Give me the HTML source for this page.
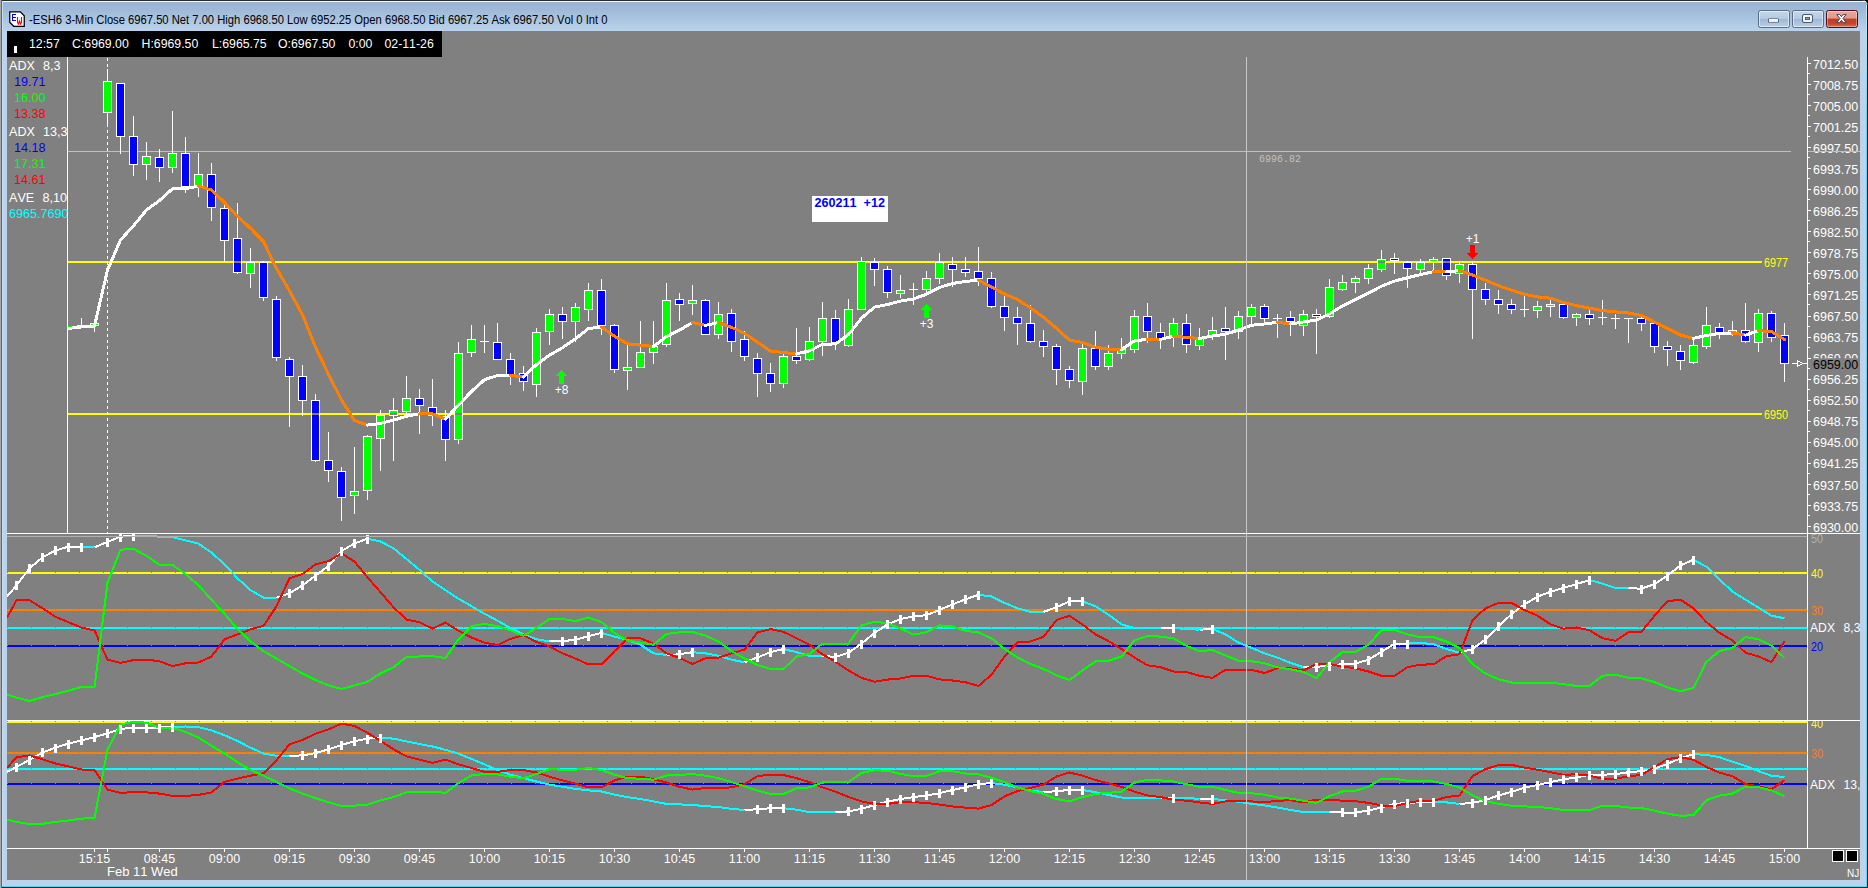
<!DOCTYPE html>
<html><head><meta charset="utf-8"><title>ESH6 3-Min</title>
<style>
html,body{margin:0;padding:0;background:#000;}
#win{border-top-right-radius:6px;position:relative;width:1868px;height:888px;overflow:hidden;background:#bcd3eb;font-family:"Liberation Sans",sans-serif;font-kerning:none;}
#tb{position:absolute;left:0;top:0;width:1868px;height:31px;background:linear-gradient(#98b4d2 2px,#9cb8d6 8px,#bad2ec 31px);}
#chart{position:absolute;left:7px;top:31px;width:1853px;height:849px;background:#808080;}
.t{position:absolute;white-space:nowrap;line-height:16px;font-size:12.3px;color:#fff;}
.c{font-size:12.5px}
.c{text-align:center;}
#title{position:absolute;left:29px;top:12px;font-size:12.5px;line-height:16px;color:#000;white-space:nowrap;transform:scaleX(0.897);transform-origin:0 0;}
.btn{position:absolute;top:10px;height:18px;width:32px;border:1px solid #5a6b82;border-radius:2.5px;box-sizing:border-box;background:linear-gradient(#c4d6ea 0,#b4cae2 48%,#9db8d6 52%,#b9cfe8 100%);box-shadow:inset 0 0 0 1px rgba(255,255,255,.55);}
#bx{border-color:#4a1020;background:linear-gradient(#eaa898 0,#e09a8a 45%,#c03c24 50%,#c8452c 80%,#d8705a 100%);box-shadow:inset 0 0 0 1px rgba(255,255,255,.35);}
#info{position:absolute;left:7px;top:31px;width:435px;height:26px;background:#000;}
</style></head><body>
<div id="win">
<div id="tb"></div>
<div style="position:absolute;left:2px;top:0;width:1868px;height:1px;background:#2a2a2a"></div>
<div style="position:absolute;left:2px;top:1px;width:1864px;height:1px;background:#f4f8fc"></div>
<div style="position:absolute;left:0;top:0;width:1px;height:888px;background:#a8a8a8"></div><div style="position:absolute;left:1px;top:0;width:1px;height:888px;background:#666"></div>
<div style="position:absolute;left:2px;top:1px;width:1px;height:886px;background:#c4dcf4"></div>
<div style="position:absolute;left:1866px;top:5px;width:1px;height:888px;background:linear-gradient(#b8f0fc,#4fdcf8 120px)"></div>
<div style="position:absolute;left:1867px;top:0px;width:1px;height:888px;background:#000"></div>
<div style="position:absolute;left:2px;top:886px;width:1865px;height:1px;background:#3ce0fc"></div>
<div style="position:absolute;left:2px;top:887px;width:1868px;height:1px;background:#101010"></div>
<svg style="position:absolute;left:9px;top:11px" width="16" height="16" viewBox="0 0 16 16">
<polygon points="0.75,0.75 11.3,0.75 15.25,4.7 15.25,15.25 4.7,15.25 0.75,11.3" fill="#fff" stroke="#000" stroke-width="1.25"/>
<path d="M7 3.5H3.5V9.5H7M3.5 6.5H6.5" fill="none" stroke="#0000ff" stroke-width="1.15" shape-rendering="crispEdges"/>
<path d="M8.5 6V11.5L9.5 13L10.5 10L11.5 13L12.5 11.5V6" fill="none" stroke="#ff0000" stroke-width="1.15"/>
</svg>
<div id="title">-ESH6 3-Min Close 6967.50 Net 7.00 High 6968.50 Low 6952.25 Open 6968.50 Bid 6967.25 Ask 6967.50 Vol 0 Int 0</div>
<div class="btn" style="left:1758px"><div style="position:absolute;left:9px;top:7px;width:9px;height:3px;background:linear-gradient(#fff,#e4e4e4);border:1px solid #56667e;border-top-color:#7888a0;border-bottom-color:#7888a0;border-radius:1.5px;box-sizing:content-box"></div></div>
<div class="btn" style="left:1792px"><div style="position:absolute;left:10.3px;top:3.8px;width:4.6px;height:2.8px;border:2px solid #f4f4f4;outline:1px solid #4a5a70;border-radius:1px;background:#8fa9c8;box-shadow:inset 0 0 0 1px #4a5a70"></div></div>
<div class="btn" id="bx" style="left:1826px"><svg width="30" height="16" style="position:absolute;left:0;top:0"><polygon points="9.75,3.60 12.75,3.60 14.45,5.67 16.15,3.60 19.15,3.60 15.95,7.50 19.15,11.40 16.15,11.40 14.45,9.33 12.75,11.40 9.75,11.40 12.95,7.50" fill="#fff" stroke="#3c4658" stroke-width="1" stroke-linejoin="round"/></svg></div>
<div id="chart"></div>
<div id="info">
<div style="position:absolute;left:7px;top:15px;width:3px;height:7px;background:#fff"></div>
<div class="t" style="left:22px;top:5px;font-size:12.3px">12:57</div>
<div class="t" style="left:65px;top:5px;font-size:12.3px">C:6969.00</div>
<div class="t" style="left:134.5px;top:5px;font-size:12.3px">H:6969.50</div>
<div class="t" style="left:205px;top:5px;font-size:12.3px">L:6965.75</div>
<div class="t" style="left:271px;top:5px;font-size:12.3px">O:6967.50</div>
<div class="t" style="left:341.5px;top:5px;font-size:12.3px">0:00</div>
<div class="t" style="left:377.5px;top:5px;font-size:12.3px">02-11-26</div>
</div>
<svg style="position:absolute;left:0;top:0" width="1868" height="888" viewBox="0 0 1868 888" shape-rendering="crispEdges">
<defs>
<pattern id="dots" x="7" y="0" width="24" height="1" patternUnits="userSpaceOnUse"><rect x="0" y="0" width="1" height="1" fill="#8a8a8a"/></pattern>
<clipPath id="cm"><rect x="67" y="57" width="1740" height="476"/></clipPath>
<clipPath id="c1"><rect x="7" y="534" width="1800" height="186"/></clipPath>
<clipPath id="c2"><rect x="7" y="721" width="1800" height="127"/></clipPath>
</defs>
<g clip-path="url(#cm)">
<rect x="67" y="151" width="1724" height="1" fill="#c0c0c0"/>
<rect x="67" y="261" width="1695" height="2" fill="#ffff00"/>
<rect x="67" y="413" width="1695" height="2" fill="#ffff00"/>
<line x1="107.5" y1="58" x2="107.5" y2="533" stroke="#fff" stroke-width="1" stroke-dasharray="3,3"/>
<rect x="68" y="326" width="4" height="1" fill="#00ff00"/>
<rect x="81" y="318" width="1" height="10" fill="#fff"/>
<rect x="77" y="325" width="9" height="1" fill="#fff"/>
<rect x="94" y="322" width="1" height="10" fill="#fff"/>
<rect x="90" y="323" width="9" height="3" fill="#fff"/>
<rect x="91" y="324" width="7" height="1" fill="#00ff00"/>
<rect x="107" y="69" width="1" height="58" fill="#fff"/>
<rect x="103" y="81" width="9" height="32" fill="#fff"/>
<rect x="104" y="82" width="7" height="30" fill="#00ff00"/>
<rect x="120" y="83" width="1" height="71" fill="#fff"/>
<rect x="116" y="83" width="9" height="54" fill="#fff"/>
<rect x="117" y="84" width="7" height="52" fill="#0000ff"/>
<rect x="133" y="116" width="1" height="60" fill="#fff"/>
<rect x="129" y="136" width="9" height="29" fill="#fff"/>
<rect x="130" y="137" width="7" height="27" fill="#0000ff"/>
<rect x="146" y="142" width="1" height="38" fill="#fff"/>
<rect x="142" y="156" width="9" height="9" fill="#fff"/>
<rect x="143" y="157" width="7" height="7" fill="#00ff00"/>
<rect x="159" y="149" width="1" height="33" fill="#fff"/>
<rect x="155" y="157" width="9" height="11" fill="#fff"/>
<rect x="156" y="158" width="7" height="9" fill="#0000ff"/>
<rect x="172" y="111" width="1" height="62" fill="#fff"/>
<rect x="168" y="153" width="9" height="15" fill="#fff"/>
<rect x="169" y="154" width="7" height="13" fill="#00ff00"/>
<rect x="185" y="137" width="1" height="56" fill="#fff"/>
<rect x="181" y="153" width="9" height="34" fill="#fff"/>
<rect x="182" y="154" width="7" height="32" fill="#0000ff"/>
<rect x="198" y="153" width="1" height="44" fill="#fff"/>
<rect x="194" y="174" width="9" height="14" fill="#fff"/>
<rect x="195" y="175" width="7" height="12" fill="#00ff00"/>
<rect x="211" y="163" width="1" height="58" fill="#fff"/>
<rect x="207" y="174" width="9" height="34" fill="#fff"/>
<rect x="208" y="175" width="7" height="32" fill="#0000ff"/>
<rect x="224" y="205" width="1" height="56" fill="#fff"/>
<rect x="220" y="208" width="9" height="33" fill="#fff"/>
<rect x="221" y="209" width="7" height="31" fill="#0000ff"/>
<rect x="237" y="203" width="1" height="71" fill="#fff"/>
<rect x="233" y="238" width="9" height="35" fill="#fff"/>
<rect x="234" y="239" width="7" height="33" fill="#0000ff"/>
<rect x="234" y="261" width="7" height="2" fill="#808080"/>
<rect x="250" y="248" width="1" height="40" fill="#fff"/>
<rect x="246" y="262" width="9" height="12" fill="#fff"/>
<rect x="247" y="263" width="7" height="10" fill="#00ff00"/>
<rect x="263" y="261" width="1" height="40" fill="#fff"/>
<rect x="259" y="262" width="9" height="36" fill="#fff"/>
<rect x="260" y="263" width="7" height="34" fill="#0000ff"/>
<rect x="276" y="296" width="1" height="65" fill="#fff"/>
<rect x="272" y="299" width="9" height="59" fill="#fff"/>
<rect x="273" y="300" width="7" height="57" fill="#0000ff"/>
<rect x="289" y="357" width="1" height="70" fill="#fff"/>
<rect x="285" y="359" width="9" height="18" fill="#fff"/>
<rect x="286" y="360" width="7" height="16" fill="#0000ff"/>
<rect x="302" y="365" width="1" height="51" fill="#fff"/>
<rect x="298" y="376" width="9" height="25" fill="#fff"/>
<rect x="299" y="377" width="7" height="23" fill="#0000ff"/>
<rect x="315" y="394" width="1" height="68" fill="#fff"/>
<rect x="311" y="400" width="9" height="61" fill="#fff"/>
<rect x="312" y="401" width="7" height="59" fill="#0000ff"/>
<rect x="312" y="413" width="7" height="2" fill="#808080"/>
<rect x="328" y="432" width="1" height="50" fill="#fff"/>
<rect x="324" y="460" width="9" height="11" fill="#fff"/>
<rect x="325" y="461" width="7" height="9" fill="#0000ff"/>
<rect x="341" y="467" width="1" height="54" fill="#fff"/>
<rect x="337" y="471" width="9" height="27" fill="#fff"/>
<rect x="338" y="472" width="7" height="25" fill="#0000ff"/>
<rect x="354" y="447" width="1" height="67" fill="#fff"/>
<rect x="350" y="491" width="9" height="5" fill="#fff"/>
<rect x="351" y="492" width="7" height="3" fill="#00ff00"/>
<rect x="367" y="435" width="1" height="65" fill="#fff"/>
<rect x="363" y="436" width="9" height="55" fill="#fff"/>
<rect x="364" y="437" width="7" height="53" fill="#00ff00"/>
<rect x="380" y="410" width="1" height="61" fill="#fff"/>
<rect x="376" y="415" width="9" height="24" fill="#fff"/>
<rect x="377" y="416" width="7" height="22" fill="#00ff00"/>
<rect x="393" y="398" width="1" height="63" fill="#fff"/>
<rect x="389" y="410" width="9" height="6" fill="#fff"/>
<rect x="390" y="411" width="7" height="4" fill="#00ff00"/>
<rect x="390" y="413" width="7" height="2" fill="#808080"/>
<rect x="406" y="376" width="1" height="39" fill="#fff"/>
<rect x="402" y="398" width="9" height="14" fill="#fff"/>
<rect x="403" y="399" width="7" height="12" fill="#00ff00"/>
<rect x="419" y="389" width="1" height="45" fill="#fff"/>
<rect x="415" y="398" width="9" height="8" fill="#fff"/>
<rect x="416" y="399" width="7" height="6" fill="#0000ff"/>
<rect x="432" y="379" width="1" height="47" fill="#fff"/>
<rect x="428" y="407" width="9" height="9" fill="#fff"/>
<rect x="429" y="408" width="7" height="7" fill="#0000ff"/>
<rect x="429" y="413" width="7" height="2" fill="#808080"/>
<rect x="445" y="410" width="1" height="51" fill="#fff"/>
<rect x="441" y="416" width="9" height="24" fill="#fff"/>
<rect x="442" y="417" width="7" height="22" fill="#0000ff"/>
<rect x="458" y="342" width="1" height="102" fill="#fff"/>
<rect x="454" y="353" width="9" height="87" fill="#fff"/>
<rect x="455" y="354" width="7" height="85" fill="#00ff00"/>
<rect x="455" y="413" width="7" height="2" fill="#808080"/>
<rect x="471" y="325" width="1" height="32" fill="#fff"/>
<rect x="467" y="339" width="9" height="14" fill="#fff"/>
<rect x="468" y="340" width="7" height="12" fill="#00ff00"/>
<rect x="484" y="325" width="1" height="28" fill="#fff"/>
<rect x="480" y="341" width="9" height="1" fill="#fff"/>
<rect x="497" y="323" width="1" height="37" fill="#fff"/>
<rect x="493" y="342" width="9" height="18" fill="#fff"/>
<rect x="494" y="343" width="7" height="16" fill="#0000ff"/>
<rect x="510" y="353" width="1" height="32" fill="#fff"/>
<rect x="506" y="359" width="9" height="16" fill="#fff"/>
<rect x="507" y="360" width="7" height="14" fill="#0000ff"/>
<rect x="523" y="366" width="1" height="25" fill="#fff"/>
<rect x="519" y="373" width="9" height="9" fill="#fff"/>
<rect x="520" y="374" width="7" height="7" fill="#0000ff"/>
<rect x="536" y="328" width="1" height="69" fill="#fff"/>
<rect x="532" y="332" width="9" height="53" fill="#fff"/>
<rect x="533" y="333" width="7" height="51" fill="#00ff00"/>
<rect x="549" y="309" width="1" height="36" fill="#fff"/>
<rect x="545" y="314" width="9" height="18" fill="#fff"/>
<rect x="546" y="315" width="7" height="16" fill="#00ff00"/>
<rect x="562" y="307" width="1" height="32" fill="#fff"/>
<rect x="558" y="314" width="9" height="8" fill="#fff"/>
<rect x="559" y="315" width="7" height="6" fill="#0000ff"/>
<rect x="575" y="303" width="1" height="39" fill="#fff"/>
<rect x="571" y="307" width="9" height="15" fill="#fff"/>
<rect x="572" y="308" width="7" height="13" fill="#00ff00"/>
<rect x="588" y="283" width="1" height="38" fill="#fff"/>
<rect x="584" y="290" width="9" height="20" fill="#fff"/>
<rect x="585" y="291" width="7" height="18" fill="#00ff00"/>
<rect x="601" y="279" width="1" height="56" fill="#fff"/>
<rect x="597" y="290" width="9" height="36" fill="#fff"/>
<rect x="598" y="291" width="7" height="34" fill="#0000ff"/>
<rect x="614" y="324" width="1" height="49" fill="#fff"/>
<rect x="610" y="325" width="9" height="45" fill="#fff"/>
<rect x="611" y="326" width="7" height="43" fill="#0000ff"/>
<rect x="627" y="342" width="1" height="48" fill="#fff"/>
<rect x="623" y="367" width="9" height="4" fill="#fff"/>
<rect x="624" y="368" width="7" height="2" fill="#00ff00"/>
<rect x="640" y="321" width="1" height="47" fill="#fff"/>
<rect x="636" y="352" width="9" height="16" fill="#fff"/>
<rect x="637" y="353" width="7" height="14" fill="#00ff00"/>
<rect x="653" y="321" width="1" height="43" fill="#fff"/>
<rect x="649" y="346" width="9" height="7" fill="#fff"/>
<rect x="650" y="347" width="7" height="5" fill="#00ff00"/>
<rect x="666" y="283" width="1" height="64" fill="#fff"/>
<rect x="662" y="300" width="9" height="45" fill="#fff"/>
<rect x="663" y="301" width="7" height="43" fill="#00ff00"/>
<rect x="679" y="293" width="1" height="28" fill="#fff"/>
<rect x="675" y="299" width="9" height="6" fill="#fff"/>
<rect x="676" y="300" width="7" height="4" fill="#0000ff"/>
<rect x="692" y="285" width="1" height="30" fill="#fff"/>
<rect x="688" y="300" width="9" height="4" fill="#fff"/>
<rect x="689" y="301" width="7" height="2" fill="#00ff00"/>
<rect x="705" y="299" width="1" height="36" fill="#fff"/>
<rect x="701" y="300" width="9" height="35" fill="#fff"/>
<rect x="702" y="301" width="7" height="33" fill="#0000ff"/>
<rect x="718" y="302" width="1" height="37" fill="#fff"/>
<rect x="714" y="314" width="9" height="21" fill="#fff"/>
<rect x="715" y="315" width="7" height="19" fill="#00ff00"/>
<rect x="731" y="309" width="1" height="43" fill="#fff"/>
<rect x="727" y="313" width="9" height="29" fill="#fff"/>
<rect x="728" y="314" width="7" height="27" fill="#0000ff"/>
<rect x="744" y="331" width="1" height="30" fill="#fff"/>
<rect x="740" y="339" width="9" height="18" fill="#fff"/>
<rect x="741" y="340" width="7" height="16" fill="#0000ff"/>
<rect x="757" y="353" width="1" height="44" fill="#fff"/>
<rect x="753" y="358" width="9" height="16" fill="#fff"/>
<rect x="754" y="359" width="7" height="14" fill="#0000ff"/>
<rect x="770" y="363" width="1" height="29" fill="#fff"/>
<rect x="766" y="373" width="9" height="11" fill="#fff"/>
<rect x="767" y="374" width="7" height="9" fill="#0000ff"/>
<rect x="783" y="354" width="1" height="34" fill="#fff"/>
<rect x="779" y="356" width="9" height="28" fill="#fff"/>
<rect x="780" y="357" width="7" height="26" fill="#00ff00"/>
<rect x="796" y="328" width="1" height="36" fill="#fff"/>
<rect x="792" y="356" width="9" height="5" fill="#fff"/>
<rect x="793" y="357" width="7" height="3" fill="#0000ff"/>
<rect x="809" y="327" width="1" height="34" fill="#fff"/>
<rect x="805" y="341" width="9" height="19" fill="#fff"/>
<rect x="806" y="342" width="7" height="17" fill="#00ff00"/>
<rect x="822" y="302" width="1" height="54" fill="#fff"/>
<rect x="818" y="318" width="9" height="24" fill="#fff"/>
<rect x="819" y="319" width="7" height="22" fill="#00ff00"/>
<rect x="835" y="310" width="1" height="40" fill="#fff"/>
<rect x="831" y="318" width="9" height="25" fill="#fff"/>
<rect x="832" y="319" width="7" height="23" fill="#0000ff"/>
<rect x="848" y="299" width="1" height="48" fill="#fff"/>
<rect x="844" y="309" width="9" height="37" fill="#fff"/>
<rect x="845" y="310" width="7" height="35" fill="#00ff00"/>
<rect x="861" y="257" width="1" height="53" fill="#fff"/>
<rect x="857" y="261" width="9" height="49" fill="#fff"/>
<rect x="858" y="262" width="7" height="47" fill="#00ff00"/>
<rect x="874" y="258" width="1" height="28" fill="#fff"/>
<rect x="870" y="262" width="9" height="8" fill="#fff"/>
<rect x="871" y="263" width="7" height="6" fill="#0000ff"/>
<rect x="887" y="266" width="1" height="32" fill="#fff"/>
<rect x="883" y="269" width="9" height="24" fill="#fff"/>
<rect x="884" y="270" width="7" height="22" fill="#0000ff"/>
<rect x="900" y="275" width="1" height="23" fill="#fff"/>
<rect x="896" y="290" width="9" height="4" fill="#fff"/>
<rect x="897" y="291" width="7" height="2" fill="#00ff00"/>
<rect x="913" y="283" width="1" height="22" fill="#fff"/>
<rect x="909" y="289" width="9" height="1" fill="#fff"/>
<rect x="926" y="271" width="1" height="23" fill="#fff"/>
<rect x="922" y="278" width="9" height="12" fill="#fff"/>
<rect x="923" y="279" width="7" height="10" fill="#00ff00"/>
<rect x="939" y="253" width="1" height="31" fill="#fff"/>
<rect x="935" y="262" width="9" height="17" fill="#fff"/>
<rect x="936" y="263" width="7" height="15" fill="#00ff00"/>
<rect x="952" y="257" width="1" height="30" fill="#fff"/>
<rect x="948" y="264" width="9" height="6" fill="#fff"/>
<rect x="949" y="265" width="7" height="4" fill="#0000ff"/>
<rect x="965" y="257" width="1" height="20" fill="#fff"/>
<rect x="961" y="269" width="9" height="4" fill="#fff"/>
<rect x="962" y="270" width="7" height="2" fill="#0000ff"/>
<rect x="978" y="247" width="1" height="39" fill="#fff"/>
<rect x="974" y="271" width="9" height="8" fill="#fff"/>
<rect x="975" y="272" width="7" height="6" fill="#0000ff"/>
<rect x="991" y="272" width="1" height="36" fill="#fff"/>
<rect x="987" y="278" width="9" height="29" fill="#fff"/>
<rect x="988" y="279" width="7" height="27" fill="#0000ff"/>
<rect x="1004" y="296" width="1" height="35" fill="#fff"/>
<rect x="1000" y="306" width="9" height="12" fill="#fff"/>
<rect x="1001" y="307" width="7" height="10" fill="#0000ff"/>
<rect x="1017" y="307" width="1" height="38" fill="#fff"/>
<rect x="1013" y="317" width="9" height="7" fill="#fff"/>
<rect x="1014" y="318" width="7" height="5" fill="#0000ff"/>
<rect x="1030" y="305" width="1" height="38" fill="#fff"/>
<rect x="1026" y="323" width="9" height="19" fill="#fff"/>
<rect x="1027" y="324" width="7" height="17" fill="#0000ff"/>
<rect x="1043" y="330" width="1" height="27" fill="#fff"/>
<rect x="1039" y="341" width="9" height="6" fill="#fff"/>
<rect x="1040" y="342" width="7" height="4" fill="#0000ff"/>
<rect x="1056" y="344" width="1" height="41" fill="#fff"/>
<rect x="1052" y="346" width="9" height="24" fill="#fff"/>
<rect x="1053" y="347" width="7" height="22" fill="#0000ff"/>
<rect x="1069" y="366" width="1" height="22" fill="#fff"/>
<rect x="1065" y="369" width="9" height="12" fill="#fff"/>
<rect x="1066" y="370" width="7" height="10" fill="#0000ff"/>
<rect x="1082" y="344" width="1" height="51" fill="#fff"/>
<rect x="1078" y="348" width="9" height="34" fill="#fff"/>
<rect x="1079" y="349" width="7" height="32" fill="#00ff00"/>
<rect x="1095" y="331" width="1" height="39" fill="#fff"/>
<rect x="1091" y="348" width="9" height="19" fill="#fff"/>
<rect x="1092" y="349" width="7" height="17" fill="#0000ff"/>
<rect x="1108" y="345" width="1" height="25" fill="#fff"/>
<rect x="1104" y="353" width="9" height="14" fill="#fff"/>
<rect x="1105" y="354" width="7" height="12" fill="#00ff00"/>
<rect x="1121" y="338" width="1" height="21" fill="#fff"/>
<rect x="1117" y="349" width="9" height="5" fill="#fff"/>
<rect x="1118" y="350" width="7" height="3" fill="#00ff00"/>
<rect x="1134" y="310" width="1" height="43" fill="#fff"/>
<rect x="1130" y="316" width="9" height="34" fill="#fff"/>
<rect x="1131" y="317" width="7" height="32" fill="#00ff00"/>
<rect x="1147" y="303" width="1" height="40" fill="#fff"/>
<rect x="1143" y="316" width="9" height="16" fill="#fff"/>
<rect x="1144" y="317" width="7" height="14" fill="#0000ff"/>
<rect x="1160" y="323" width="1" height="26" fill="#fff"/>
<rect x="1156" y="332" width="9" height="7" fill="#fff"/>
<rect x="1157" y="333" width="7" height="5" fill="#0000ff"/>
<rect x="1173" y="318" width="1" height="29" fill="#fff"/>
<rect x="1169" y="323" width="9" height="13" fill="#fff"/>
<rect x="1170" y="324" width="7" height="11" fill="#00ff00"/>
<rect x="1186" y="314" width="1" height="39" fill="#fff"/>
<rect x="1182" y="323" width="9" height="22" fill="#fff"/>
<rect x="1183" y="324" width="7" height="20" fill="#0000ff"/>
<rect x="1199" y="328" width="1" height="22" fill="#fff"/>
<rect x="1195" y="338" width="9" height="8" fill="#fff"/>
<rect x="1196" y="339" width="7" height="6" fill="#00ff00"/>
<rect x="1212" y="317" width="1" height="23" fill="#fff"/>
<rect x="1208" y="330" width="9" height="6" fill="#fff"/>
<rect x="1209" y="331" width="7" height="4" fill="#00ff00"/>
<rect x="1225" y="307" width="1" height="53" fill="#fff"/>
<rect x="1221" y="328" width="9" height="4" fill="#fff"/>
<rect x="1222" y="329" width="7" height="2" fill="#0000ff"/>
<rect x="1238" y="311" width="1" height="28" fill="#fff"/>
<rect x="1234" y="316" width="9" height="16" fill="#fff"/>
<rect x="1235" y="317" width="7" height="14" fill="#00ff00"/>
<rect x="1251" y="304" width="1" height="21" fill="#fff"/>
<rect x="1247" y="307" width="9" height="10" fill="#fff"/>
<rect x="1248" y="308" width="7" height="8" fill="#00ff00"/>
<rect x="1264" y="304" width="1" height="19" fill="#fff"/>
<rect x="1260" y="306" width="9" height="13" fill="#fff"/>
<rect x="1261" y="307" width="7" height="11" fill="#0000ff"/>
<rect x="1277" y="314" width="1" height="24" fill="#fff"/>
<rect x="1273" y="318" width="9" height="1" fill="#fff"/>
<rect x="1290" y="311" width="1" height="25" fill="#fff"/>
<rect x="1286" y="317" width="9" height="5" fill="#fff"/>
<rect x="1287" y="318" width="7" height="3" fill="#0000ff"/>
<rect x="1303" y="310" width="1" height="26" fill="#fff"/>
<rect x="1299" y="314" width="9" height="12" fill="#fff"/>
<rect x="1300" y="315" width="7" height="10" fill="#00ff00"/>
<rect x="1316" y="309" width="1" height="45" fill="#fff"/>
<rect x="1312" y="314" width="9" height="3" fill="#fff"/>
<rect x="1313" y="315" width="7" height="1" fill="#0000ff"/>
<rect x="1329" y="279" width="1" height="39" fill="#fff"/>
<rect x="1325" y="287" width="9" height="30" fill="#fff"/>
<rect x="1326" y="288" width="7" height="28" fill="#00ff00"/>
<rect x="1342" y="275" width="1" height="16" fill="#fff"/>
<rect x="1338" y="282" width="9" height="8" fill="#fff"/>
<rect x="1339" y="283" width="7" height="6" fill="#00ff00"/>
<rect x="1355" y="276" width="1" height="17" fill="#fff"/>
<rect x="1351" y="278" width="9" height="5" fill="#fff"/>
<rect x="1352" y="279" width="7" height="3" fill="#00ff00"/>
<rect x="1368" y="264" width="1" height="20" fill="#fff"/>
<rect x="1364" y="268" width="9" height="11" fill="#fff"/>
<rect x="1365" y="269" width="7" height="9" fill="#00ff00"/>
<rect x="1381" y="250" width="1" height="22" fill="#fff"/>
<rect x="1377" y="259" width="9" height="11" fill="#fff"/>
<rect x="1378" y="260" width="7" height="9" fill="#00ff00"/>
<rect x="1378" y="261" width="7" height="2" fill="#808080"/>
<rect x="1394" y="253" width="1" height="21" fill="#fff"/>
<rect x="1390" y="258" width="9" height="3" fill="#fff"/>
<rect x="1391" y="259" width="7" height="1" fill="#0000ff"/>
<rect x="1407" y="261" width="1" height="27" fill="#fff"/>
<rect x="1403" y="262" width="9" height="7" fill="#fff"/>
<rect x="1404" y="263" width="7" height="5" fill="#0000ff"/>
<rect x="1420" y="259" width="1" height="14" fill="#fff"/>
<rect x="1416" y="262" width="9" height="8" fill="#fff"/>
<rect x="1417" y="263" width="7" height="6" fill="#00ff00"/>
<rect x="1433" y="257" width="1" height="14" fill="#fff"/>
<rect x="1429" y="259" width="9" height="3" fill="#fff"/>
<rect x="1430" y="260" width="7" height="1" fill="#00ff00"/>
<rect x="1446" y="258" width="1" height="22" fill="#fff"/>
<rect x="1442" y="258" width="9" height="18" fill="#fff"/>
<rect x="1443" y="259" width="7" height="16" fill="#0000ff"/>
<rect x="1443" y="261" width="7" height="2" fill="#808080"/>
<rect x="1459" y="261" width="1" height="22" fill="#fff"/>
<rect x="1455" y="264" width="9" height="10" fill="#fff"/>
<rect x="1456" y="265" width="7" height="8" fill="#00ff00"/>
<rect x="1472" y="261" width="1" height="78" fill="#fff"/>
<rect x="1468" y="264" width="9" height="26" fill="#fff"/>
<rect x="1469" y="265" width="7" height="24" fill="#0000ff"/>
<rect x="1485" y="283" width="1" height="22" fill="#fff"/>
<rect x="1481" y="289" width="9" height="11" fill="#fff"/>
<rect x="1482" y="290" width="7" height="9" fill="#0000ff"/>
<rect x="1498" y="290" width="1" height="24" fill="#fff"/>
<rect x="1494" y="299" width="9" height="6" fill="#fff"/>
<rect x="1495" y="300" width="7" height="4" fill="#0000ff"/>
<rect x="1511" y="299" width="1" height="15" fill="#fff"/>
<rect x="1507" y="304" width="9" height="6" fill="#fff"/>
<rect x="1508" y="305" width="7" height="4" fill="#0000ff"/>
<rect x="1524" y="295" width="1" height="22" fill="#fff"/>
<rect x="1520" y="309" width="9" height="1" fill="#fff"/>
<rect x="1537" y="301" width="1" height="17" fill="#fff"/>
<rect x="1533" y="306" width="9" height="5" fill="#fff"/>
<rect x="1534" y="307" width="7" height="3" fill="#00ff00"/>
<rect x="1550" y="300" width="1" height="17" fill="#fff"/>
<rect x="1546" y="304" width="9" height="3" fill="#fff"/>
<rect x="1547" y="305" width="7" height="1" fill="#00ff00"/>
<rect x="1563" y="304" width="1" height="15" fill="#fff"/>
<rect x="1559" y="304" width="9" height="14" fill="#fff"/>
<rect x="1560" y="305" width="7" height="12" fill="#0000ff"/>
<rect x="1576" y="313" width="1" height="13" fill="#fff"/>
<rect x="1572" y="314" width="9" height="4" fill="#fff"/>
<rect x="1573" y="315" width="7" height="2" fill="#00ff00"/>
<rect x="1589" y="310" width="1" height="15" fill="#fff"/>
<rect x="1585" y="314" width="9" height="5" fill="#fff"/>
<rect x="1586" y="315" width="7" height="3" fill="#0000ff"/>
<rect x="1602" y="300" width="1" height="25" fill="#fff"/>
<rect x="1598" y="317" width="9" height="1" fill="#fff"/>
<rect x="1615" y="314" width="1" height="15" fill="#fff"/>
<rect x="1611" y="318" width="9" height="1" fill="#fff"/>
<rect x="1628" y="318" width="1" height="25" fill="#fff"/>
<rect x="1624" y="318" width="9" height="1" fill="#fff"/>
<rect x="1641" y="317" width="1" height="14" fill="#fff"/>
<rect x="1637" y="318" width="9" height="6" fill="#fff"/>
<rect x="1638" y="319" width="7" height="4" fill="#0000ff"/>
<rect x="1654" y="322" width="1" height="31" fill="#fff"/>
<rect x="1650" y="323" width="9" height="24" fill="#fff"/>
<rect x="1651" y="324" width="7" height="22" fill="#0000ff"/>
<rect x="1667" y="341" width="1" height="25" fill="#fff"/>
<rect x="1663" y="346" width="9" height="4" fill="#fff"/>
<rect x="1664" y="347" width="7" height="2" fill="#0000ff"/>
<rect x="1680" y="345" width="1" height="25" fill="#fff"/>
<rect x="1676" y="351" width="9" height="10" fill="#fff"/>
<rect x="1677" y="352" width="7" height="8" fill="#0000ff"/>
<rect x="1693" y="339" width="1" height="25" fill="#fff"/>
<rect x="1689" y="345" width="9" height="18" fill="#fff"/>
<rect x="1690" y="346" width="7" height="16" fill="#00ff00"/>
<rect x="1706" y="307" width="1" height="42" fill="#fff"/>
<rect x="1702" y="325" width="9" height="22" fill="#fff"/>
<rect x="1703" y="326" width="7" height="20" fill="#00ff00"/>
<rect x="1719" y="323" width="1" height="16" fill="#fff"/>
<rect x="1715" y="327" width="9" height="6" fill="#fff"/>
<rect x="1716" y="328" width="7" height="4" fill="#0000ff"/>
<rect x="1732" y="321" width="1" height="15" fill="#fff"/>
<rect x="1728" y="330" width="9" height="4" fill="#fff"/>
<rect x="1729" y="331" width="7" height="2" fill="#00ff00"/>
<rect x="1745" y="303" width="1" height="40" fill="#fff"/>
<rect x="1741" y="330" width="9" height="12" fill="#fff"/>
<rect x="1742" y="331" width="7" height="10" fill="#0000ff"/>
<rect x="1758" y="309" width="1" height="43" fill="#fff"/>
<rect x="1754" y="313" width="9" height="30" fill="#fff"/>
<rect x="1755" y="314" width="7" height="28" fill="#00ff00"/>
<rect x="1771" y="311" width="1" height="31" fill="#fff"/>
<rect x="1767" y="313" width="9" height="25" fill="#fff"/>
<rect x="1768" y="314" width="7" height="23" fill="#0000ff"/>
<rect x="1784" y="323" width="1" height="59" fill="#fff"/>
<rect x="1780" y="335" width="9" height="29" fill="#fff"/>
<rect x="1781" y="336" width="7" height="27" fill="#0000ff"/>
</g>
<g clip-path="url(#cm)" stroke-linecap="round" stroke-linejoin="round">
<polyline points="67,328.5 81.5,327 94.5,326 107.5,270 120.5,240 133.5,225.7 146.5,210 159.5,200.5 172.5,188.8 185.5,188.8 198.5,186" fill="none" stroke="#ffffff" stroke-width="3" />
<polyline points="198.5,186 211.5,190 224.5,202.5 237.5,216.3 250.5,228.3 263.5,241.6 276.5,268.5 289.5,290.8 302.5,314.8 315.5,347 328.5,374.3 341.5,400 354.5,420.5 367.5,425.1" fill="none" stroke="#ff8000" stroke-width="3" />
<polyline points="367.5,425.1 380.5,423.4 393.5,420.2 406.5,416.2 419.5,413.7" fill="none" stroke="#ffffff" stroke-width="3" />
<polyline points="419.5,413.7 432.5,414 445.5,419.1" fill="none" stroke="#ff8000" stroke-width="3" />
<polyline points="445.5,419.1 458.5,405.1 471.5,391.4 484.5,379.7 497.5,375.5 510.5,375.4" fill="none" stroke="#ffffff" stroke-width="3" />
<polyline points="510.5,375.4 523.5,377" fill="none" stroke="#ff8000" stroke-width="3" />
<polyline points="523.5,377 536.5,364.5 549.5,355.1 562.5,347.7 575.5,338.8 588.5,328.5 601.5,327.2" fill="none" stroke="#ffffff" stroke-width="3" />
<polyline points="601.5,327.2 614.5,336.2 627.5,343.9 640.5,345.1 653.5,346.5" fill="none" stroke="#ff8000" stroke-width="3" />
<polyline points="653.5,346.5 666.5,336.6 679.5,330.2 692.5,322.5" fill="none" stroke="#ffffff" stroke-width="3" />
<polyline points="692.5,322.5 705.5,325.4" fill="none" stroke="#ff8000" stroke-width="3" />
<polyline points="705.5,325.4 718.5,322.5" fill="none" stroke="#ffffff" stroke-width="3" />
<polyline points="718.5,322.5 731.5,327.3 744.5,333.3 757.5,342.2 770.5,351.1 783.5,352.5 796.5,353.9" fill="none" stroke="#ff8000" stroke-width="3" />
<polyline points="796.5,353.9 809.5,350.8 822.5,344.3 835.5,343.9 848.5,334.5 861.5,318.2 874.5,307.1 887.5,304.5 900.5,301.1 913.5,298.9 926.5,294.2 939.5,287.4 952.5,283.5 965.5,281.4 978.5,280.2" fill="none" stroke="#ffffff" stroke-width="3" />
<polyline points="978.5,280.2 991.5,287 1004.5,294.2 1017.5,299.4 1030.5,308 1043.5,317.3 1056.5,328.3 1069.5,340.2 1082.5,342.5 1095.5,347.2 1108.5,349.2 1121.5,349.7" fill="none" stroke="#ff8000" stroke-width="3" />
<polyline points="1121.5,349.7 1134.5,340.7 1147.5,339.4" fill="none" stroke="#ffffff" stroke-width="3" />
<polyline points="1147.5,339.4 1160.5,339.4" fill="none" stroke="#ff8000" stroke-width="3" />
<polyline points="1160.5,339.4 1173.5,336.3" fill="none" stroke="#ffffff" stroke-width="3" />
<polyline points="1173.5,336.3 1186.5,337.3 1199.5,338.5" fill="none" stroke="#ff8000" stroke-width="3" />
<polyline points="1199.5,338.5 1212.5,336 1225.5,334.2 1238.5,330 1251.5,325.3 1264.5,324 1277.5,322.2" fill="none" stroke="#ffffff" stroke-width="3" />
<polyline points="1277.5,322.2 1290.5,324" fill="none" stroke="#ff8000" stroke-width="3" />
<polyline points="1290.5,324 1303.5,321.9 1316.5,320.2 1329.5,313.7 1342.5,306 1355.5,299.5 1368.5,293.1 1381.5,286.2 1394.5,281.1 1407.5,277.7 1420.5,274.6 1433.5,271.7" fill="none" stroke="#ffffff" stroke-width="3" />
<polyline points="1433.5,271.7 1446.5,272" fill="none" stroke="#ff8000" stroke-width="3" />
<polyline points="1446.5,272 1459.5,270.5" fill="none" stroke="#ffffff" stroke-width="3" />
<polyline points="1459.5,270.5 1472.5,275.1 1485.5,280.2 1498.5,285.7 1511.5,290.2 1524.5,294.3 1537.5,296.9 1550.5,298.2 1563.5,302.5 1576.5,305.6 1589.5,308.2 1602.5,310.6 1615.5,311.9 1628.5,313 1641.5,315.5 1654.5,322.2 1667.5,328.6 1680.5,335 1693.5,338.4" fill="none" stroke="#ff8000" stroke-width="3" />
<polyline points="1693.5,338.4 1706.5,335.4 1719.5,333.4 1732.5,333" fill="none" stroke="#ffffff" stroke-width="3" />
<polyline points="1732.5,333 1745.5,335.1" fill="none" stroke="#ff8000" stroke-width="3" />
<polyline points="1745.5,335.1 1758.5,330.7" fill="none" stroke="#ffffff" stroke-width="3" />
<polyline points="1758.5,330.7 1771.5,331.6 1784.5,339.5" fill="none" stroke="#ff8000" stroke-width="3" />
</g>
<polygon points="561.5,370 567.5,376 564.0,376 564.0,384 559.0,384 559.0,376 555.5,376" fill="#00ff00"/>
<polygon points="926.5,304 932.5,310 929.0,310 929.0,318 924.0,318 924.0,310 920.5,310" fill="#00ff00"/>
<polygon points="1472.5,259 1478.5,253 1475.0,253 1475.0,245 1470.0,245 1470.0,253 1466.5,253" fill="#ff0000"/>
<rect x="1792" y="363" width="15" height="1" fill="#fff"/>
<polygon points="1797.5,360.5 1802.5,363.5 1797.5,366.5" fill="#808080" stroke="#fff" stroke-width="1"/>
<g clip-path="url(#c1)">
<rect x="7" y="572" width="1800" height="2" fill="#ffff00"/>
<rect x="7" y="572" width="1800" height="1" fill="url(#dots)"/>
<rect x="7" y="609" width="1800" height="2" fill="#ff8000"/>
<rect x="7" y="609" width="1800" height="1" fill="url(#dots)"/>
<rect x="7" y="627" width="1800" height="2" fill="#00ffff"/>
<rect x="7" y="627" width="1800" height="1" fill="url(#dots)"/>
<rect x="7" y="645" width="1800" height="2" fill="#0000ff"/>
<rect x="7" y="645" width="1800" height="1" fill="url(#dots)"/>
<polyline points="7,596.5 16.5,585.4 29.5,568.3 42.5,557.3 55.5,550.5 68.5,546.6 81.5,546.8" fill="none" stroke="#ffffff" stroke-width="2" />
<polyline points="81.5,546.8 94.5,547.3" fill="none" stroke="#00ffff" stroke-width="2" />
<polyline points="94.5,547.3 107.5,541.9 120.5,536.6 133.5,536.1" fill="none" stroke="#ffffff" stroke-width="2" />
<polyline points="133.5,536.1 146.5,536.1 159.5,536.6 172.5,537.2 185.5,540.4 198.5,543.6 211.5,552.6 224.5,564.4 237.5,578.3 250.5,590.1 263.5,597.6 276.5,597.8" fill="none" stroke="#00ffff" stroke-width="2" />
<polyline points="276.5,597.8 289.5,593.3 302.5,585.4 315.5,575.5 328.5,565.9 341.5,551.1 354.5,543.4 367.5,538.7" fill="none" stroke="#ffffff" stroke-width="2" />
<polyline points="367.5,538.7 380.5,541.4 393.5,548.3 406.5,559 419.5,569.8 432.5,581.5 445.5,590.1 458.5,598.7 471.5,606.2 484.5,613.7 497.5,620.7 510.5,628 523.5,634.4 536.5,639.3 549.5,641.5" fill="none" stroke="#00ffff" stroke-width="2" />
<polyline points="549.5,641.5 562.5,641.1 575.5,639.8 588.5,636.1 601.5,632.9" fill="none" stroke="#ffffff" stroke-width="2" />
<polyline points="601.5,632.9 614.5,636.6 627.5,640 640.5,644.7 653.5,653.3 666.5,655" fill="none" stroke="#00ffff" stroke-width="2" />
<polyline points="666.5,655 679.5,654.3 692.5,652.2" fill="none" stroke="#ffffff" stroke-width="2" />
<polyline points="692.5,652.2 705.5,653.3 718.5,655.8 731.5,659.7 744.5,662.3" fill="none" stroke="#00ffff" stroke-width="2" />
<polyline points="744.5,662.3 757.5,657.4 770.5,652.2 783.5,649" fill="none" stroke="#ffffff" stroke-width="2" />
<polyline points="783.5,649 796.5,652.2 809.5,655.8 822.5,656" fill="none" stroke="#00ffff" stroke-width="2" />
<polyline points="822.5,656 835.5,656.9 848.5,652.8 861.5,643.6 874.5,632.9 887.5,624.4 900.5,619 913.5,616.4 926.5,615.2 939.5,609.8 952.5,604.4 965.5,599.3 978.5,594.8" fill="none" stroke="#ffffff" stroke-width="2" />
<polyline points="978.5,594.8 991.5,596.5 1004.5,602.9 1017.5,608.3 1030.5,611.9 1043.5,611.9" fill="none" stroke="#00ffff" stroke-width="2" />
<polyline points="1043.5,611.9 1056.5,607.2 1069.5,601.4 1082.5,601.4" fill="none" stroke="#ffffff" stroke-width="2" />
<polyline points="1082.5,601.4 1095.5,606.2 1108.5,614.7 1121.5,624.4 1134.5,628 1147.5,628 1160.5,628" fill="none" stroke="#00ffff" stroke-width="2" />
<polyline points="1160.5,628 1173.5,628" fill="none" stroke="#ffffff" stroke-width="2" />
<polyline points="1173.5,628 1186.5,629 1199.5,629.7" fill="none" stroke="#00ffff" stroke-width="2" />
<polyline points="1199.5,629.7 1212.5,629" fill="none" stroke="#ffffff" stroke-width="2" />
<polyline points="1212.5,629 1225.5,634.4 1238.5,642.6 1251.5,647.9 1264.5,653.3 1277.5,657.6 1290.5,662.9 1303.5,667.2" fill="none" stroke="#00ffff" stroke-width="2" />
<polyline points="1303.5,667.2 1316.5,666.8 1329.5,665.7 1342.5,664 1355.5,663.5 1368.5,659.7 1381.5,651.8 1394.5,643.6 1407.5,643.6" fill="none" stroke="#ffffff" stroke-width="2" />
<polyline points="1407.5,643.6 1420.5,643 1433.5,644.1 1446.5,649 1459.5,652.8" fill="none" stroke="#00ffff" stroke-width="2" />
<polyline points="1459.5,652.8 1472.5,649 1485.5,639.3 1498.5,626.5 1511.5,614.1 1524.5,604.4 1537.5,596.7 1550.5,591.8 1563.5,587.9 1576.5,584.1 1589.5,580" fill="none" stroke="#ffffff" stroke-width="2" />
<polyline points="1589.5,580 1602.5,583.6 1615.5,587.9 1628.5,588.3" fill="none" stroke="#00ffff" stroke-width="2" />
<polyline points="1628.5,588.3 1641.5,588.6 1654.5,584.1 1667.5,575.5 1680.5,565.4 1693.5,559.7" fill="none" stroke="#ffffff" stroke-width="2" />
<polyline points="1693.5,559.7 1706.5,566.9 1719.5,579.4 1732.5,591.6 1745.5,599.7 1758.5,607.6 1771.5,615.7 1784.5,618.3" fill="none" stroke="#00ffff" stroke-width="2" />
<polyline points="7,617.9 16.5,600.2 29.5,600.2 42.5,608.3 55.5,616.9 68.5,622.2 81.5,627.6 94.5,630.4 107.5,659.7 120.5,662.9 133.5,660.1 146.5,659.7 159.5,661.2 172.5,666.1 185.5,663.3 198.5,662.5 211.5,656.5 224.5,639.3 237.5,634.4 250.5,629.3 263.5,625.9 276.5,606.2 289.5,578.3 302.5,574 315.5,564.4 328.5,561.2 341.5,553.3 354.5,561.6 367.5,577.3 380.5,592.2 393.5,607.2 406.5,619.6 419.5,622.2 432.5,628.6 445.5,622.6 458.5,630.8 471.5,637.6 484.5,642.6 497.5,645.1 510.5,638.9 523.5,635.1 536.5,642.1 549.5,646.4 562.5,653.3 575.5,658.6 588.5,664.4 601.5,664.4 614.5,651.1 627.5,638.3 640.5,638.3 653.5,643.6 666.5,653.3 679.5,658 692.5,664 705.5,658.2 718.5,657.6 731.5,653.3 744.5,649.6 757.5,632.3 770.5,629.1 783.5,631.9 796.5,638.3 809.5,644.7 822.5,654.3 835.5,661.8 848.5,670.4 861.5,677.9 874.5,681.7 887.5,679.6 900.5,678.5 913.5,675.8 926.5,675.8 939.5,679.4 952.5,680.5 965.5,682.2 978.5,686 991.5,674.7 1004.5,656.5 1017.5,642.1 1030.5,641.5 1043.5,636.8 1056.5,620.1 1069.5,615.8 1082.5,624.4 1095.5,634.4 1108.5,641.1 1121.5,649 1134.5,657.6 1147.5,665.3 1160.5,667.2 1173.5,671.5 1186.5,672.1 1199.5,675.8 1212.5,677.9 1225.5,669.8 1238.5,669.8 1251.5,669.8 1264.5,673 1277.5,668.3 1290.5,668.3 1303.5,670.4 1316.5,664 1329.5,664 1342.5,666.5 1355.5,668.3 1368.5,671.5 1381.5,675.8 1394.5,675.8 1407.5,667.2 1420.5,664.6 1433.5,664.4 1446.5,656.1 1459.5,654.3 1472.5,620.1 1485.5,608.3 1498.5,602.9 1511.5,602.9 1524.5,610 1537.5,615.7 1550.5,624.3 1563.5,628.6 1576.5,627.5 1589.5,630.3 1602.5,638.2 1615.5,640.8 1628.5,632.2 1641.5,631.8 1654.5,615.7 1667.5,601.2 1680.5,599.7 1693.5,608.3 1706.5,622.2 1719.5,632.9 1732.5,640.4 1745.5,652.8 1758.5,656.4 1771.5,662.2 1784.5,641.4" fill="none" stroke="#ff0000" stroke-width="2" />
<polyline points="7,694.6 16.5,697.6 29.5,701 42.5,697.2 55.5,694 68.5,690.7 81.5,686.9 94.5,686.9 107.5,582.6 120.5,549.8 133.5,548.8 146.5,555.8 159.5,564.8 172.5,565 185.5,574 198.5,585.4 211.5,599.7 224.5,613.7 237.5,629.1 250.5,641.5 263.5,651.1 276.5,658.6 289.5,666.1 302.5,673.6 315.5,680 328.5,685.4 341.5,689 354.5,685.4 367.5,681.7 380.5,673.4 393.5,667.2 406.5,657.1 419.5,656.5 432.5,656.1 445.5,658 458.5,639.3 471.5,626.1 484.5,623.9 497.5,626.1 510.5,630.4 523.5,635.7 536.5,628 549.5,619 562.5,619 575.5,621.1 588.5,617.5 601.5,622.2 614.5,632.9 627.5,640.4 640.5,642.6 653.5,644.7 666.5,634 679.5,632.3 692.5,631.9 705.5,635.7 718.5,641.5 731.5,651.1 744.5,658.6 757.5,665 770.5,668.9 783.5,668.9 796.5,656.5 809.5,653.9 822.5,643.6 835.5,643.6 848.5,643.6 861.5,625.4 874.5,621.8 887.5,623.3 900.5,628.6 913.5,634.6 926.5,632.3 939.5,625.4 952.5,626.5 965.5,630.8 978.5,632.5 991.5,638.3 1004.5,649 1017.5,657.6 1030.5,664 1043.5,668.9 1056.5,675.3 1069.5,680 1082.5,670.4 1095.5,661.4 1108.5,660.8 1121.5,656.5 1134.5,640.4 1147.5,636 1160.5,636.6 1173.5,638.3 1186.5,645.8 1199.5,651.1 1212.5,650.1 1225.5,655.4 1238.5,660.8 1251.5,661.2 1264.5,663.3 1277.5,667.2 1290.5,669.3 1303.5,671.9 1316.5,678.3 1329.5,662.3 1342.5,652.2 1355.5,651.8 1368.5,644.7 1381.5,630.1 1394.5,630.1 1407.5,634.4 1420.5,637.2 1433.5,637.2 1446.5,641.5 1459.5,647.9 1472.5,664 1485.5,673.5 1498.5,679.3 1511.5,682.5 1524.5,682.5 1537.5,682.5 1550.5,682.5 1563.5,684.2 1576.5,685.9 1589.5,685.9 1602.5,675.7 1615.5,674.6 1628.5,677.8 1641.5,678.4 1654.5,682.1 1667.5,687.4 1680.5,691.3 1693.5,687.9 1706.5,661.7 1719.5,651 1732.5,647.8 1745.5,637.1 1758.5,639.3 1771.5,645.7 1784.5,657.9" fill="none" stroke="#00ff00" stroke-width="2" />
<rect x="15" y="581" width="3" height="9" fill="#fff"/>
<rect x="28" y="564" width="3" height="9" fill="#fff"/>
<rect x="41" y="553" width="3" height="9" fill="#fff"/>
<rect x="54" y="546" width="3" height="9" fill="#fff"/>
<rect x="67" y="543" width="3" height="9" fill="#fff"/>
<rect x="80" y="543" width="3" height="9" fill="#fff"/>
<rect x="106" y="538" width="3" height="9" fill="#fff"/>
<rect x="119" y="533" width="3" height="9" fill="#fff"/>
<rect x="132" y="532" width="3" height="9" fill="#fff"/>
<rect x="288" y="589" width="3" height="9" fill="#fff"/>
<rect x="301" y="581" width="3" height="9" fill="#fff"/>
<rect x="314" y="572" width="3" height="9" fill="#fff"/>
<rect x="327" y="562" width="3" height="9" fill="#fff"/>
<rect x="340" y="547" width="3" height="9" fill="#fff"/>
<rect x="353" y="539" width="3" height="9" fill="#fff"/>
<rect x="366" y="535" width="3" height="9" fill="#fff"/>
<rect x="561" y="637" width="3" height="9" fill="#fff"/>
<rect x="574" y="636" width="3" height="9" fill="#fff"/>
<rect x="587" y="632" width="3" height="9" fill="#fff"/>
<rect x="600" y="629" width="3" height="9" fill="#fff"/>
<rect x="678" y="650" width="3" height="9" fill="#fff"/>
<rect x="691" y="648" width="3" height="9" fill="#fff"/>
<rect x="756" y="653" width="3" height="9" fill="#fff"/>
<rect x="769" y="648" width="3" height="9" fill="#fff"/>
<rect x="782" y="645" width="3" height="9" fill="#fff"/>
<rect x="834" y="653" width="3" height="9" fill="#fff"/>
<rect x="847" y="649" width="3" height="9" fill="#fff"/>
<rect x="860" y="640" width="3" height="9" fill="#fff"/>
<rect x="873" y="629" width="3" height="9" fill="#fff"/>
<rect x="886" y="620" width="3" height="9" fill="#fff"/>
<rect x="899" y="615" width="3" height="9" fill="#fff"/>
<rect x="912" y="612" width="3" height="9" fill="#fff"/>
<rect x="925" y="611" width="3" height="9" fill="#fff"/>
<rect x="938" y="606" width="3" height="9" fill="#fff"/>
<rect x="951" y="600" width="3" height="9" fill="#fff"/>
<rect x="964" y="595" width="3" height="9" fill="#fff"/>
<rect x="977" y="591" width="3" height="9" fill="#fff"/>
<rect x="1055" y="603" width="3" height="9" fill="#fff"/>
<rect x="1068" y="597" width="3" height="9" fill="#fff"/>
<rect x="1081" y="597" width="3" height="9" fill="#fff"/>
<rect x="1172" y="624" width="3" height="9" fill="#fff"/>
<rect x="1211" y="625" width="3" height="9" fill="#fff"/>
<rect x="1315" y="663" width="3" height="9" fill="#fff"/>
<rect x="1328" y="662" width="3" height="9" fill="#fff"/>
<rect x="1341" y="660" width="3" height="9" fill="#fff"/>
<rect x="1354" y="660" width="3" height="9" fill="#fff"/>
<rect x="1367" y="656" width="3" height="9" fill="#fff"/>
<rect x="1380" y="648" width="3" height="9" fill="#fff"/>
<rect x="1393" y="640" width="3" height="9" fill="#fff"/>
<rect x="1406" y="640" width="3" height="9" fill="#fff"/>
<rect x="1471" y="645" width="3" height="9" fill="#fff"/>
<rect x="1484" y="635" width="3" height="9" fill="#fff"/>
<rect x="1497" y="622" width="3" height="9" fill="#fff"/>
<rect x="1510" y="610" width="3" height="9" fill="#fff"/>
<rect x="1523" y="600" width="3" height="9" fill="#fff"/>
<rect x="1536" y="593" width="3" height="9" fill="#fff"/>
<rect x="1549" y="588" width="3" height="9" fill="#fff"/>
<rect x="1562" y="584" width="3" height="9" fill="#fff"/>
<rect x="1575" y="580" width="3" height="9" fill="#fff"/>
<rect x="1588" y="576" width="3" height="9" fill="#fff"/>
<rect x="1640" y="585" width="3" height="9" fill="#fff"/>
<rect x="1653" y="580" width="3" height="9" fill="#fff"/>
<rect x="1666" y="572" width="3" height="9" fill="#fff"/>
<rect x="1679" y="561" width="3" height="9" fill="#fff"/>
<rect x="1692" y="556" width="3" height="9" fill="#fff"/>
</g>
<g clip-path="url(#c2)">
<rect x="7" y="721" width="1800" height="2" fill="#ffff00"/>
<rect x="7" y="721" width="1800" height="1" fill="url(#dots)"/>
<rect x="7" y="752" width="1800" height="2" fill="#ff8000"/>
<rect x="7" y="752" width="1800" height="1" fill="url(#dots)"/>
<rect x="7" y="768" width="1800" height="2" fill="#00ffff"/>
<rect x="7" y="768" width="1800" height="1" fill="url(#dots)"/>
<rect x="7" y="783" width="1800" height="2" fill="#0000ff"/>
<rect x="7" y="783" width="1800" height="1" fill="url(#dots)"/>
<polyline points="7,771.8 16.5,767 29.5,759.9 42.5,752.5 55.5,747.7 68.5,743.5 81.5,740.4 94.5,737.1 107.5,733.3 120.5,729 133.5,727.5 146.5,727.5 159.5,727.5 172.5,727.1" fill="none" stroke="#ffffff" stroke-width="2" />
<polyline points="172.5,727.1 185.5,726.5 198.5,727.1 211.5,730.4 224.5,735.2 237.5,741 250.5,747.7 263.5,753.5 276.5,755.8 289.5,755.8" fill="none" stroke="#00ffff" stroke-width="2" />
<polyline points="289.5,755.8 302.5,755.4 315.5,753.1 328.5,749.3 341.5,744.9 354.5,741.2 367.5,738.6 380.5,738" fill="none" stroke="#ffffff" stroke-width="2" />
<polyline points="380.5,738 393.5,738.6 406.5,741.4 419.5,744 432.5,746.5 445.5,749.8 458.5,753.6 471.5,759 484.5,764.3 497.5,770.1 510.5,774.6 523.5,778.2 536.5,781.5 549.5,784.7 562.5,786.8 575.5,788.9 588.5,790.4 601.5,791.5 614.5,794.7 627.5,797.1 640.5,799 653.5,801.4 666.5,803.9 679.5,804.4 692.5,805 705.5,806.1 718.5,807 731.5,808.9 744.5,809.9" fill="none" stroke="#00ffff" stroke-width="2" />
<polyline points="744.5,809.9 757.5,809.3 770.5,808.2 783.5,808.2" fill="none" stroke="#ffffff" stroke-width="2" />
<polyline points="783.5,808.2 796.5,809.7 809.5,812.1 822.5,812.1 835.5,812.1" fill="none" stroke="#00ffff" stroke-width="2" />
<polyline points="835.5,812.1 848.5,811.4 861.5,808.9 874.5,805 887.5,801.8 900.5,799 913.5,797.1 926.5,795.4 939.5,793.2 952.5,790 965.5,787.2 978.5,784.2 991.5,783" fill="none" stroke="#ffffff" stroke-width="2" />
<polyline points="991.5,783 1004.5,784.7 1017.5,787.4 1030.5,790.4 1043.5,792.2" fill="none" stroke="#00ffff" stroke-width="2" />
<polyline points="1043.5,792.2 1056.5,791.1 1069.5,790 1082.5,790" fill="none" stroke="#ffffff" stroke-width="2" />
<polyline points="1082.5,790 1095.5,792.2 1108.5,794.9 1121.5,797.5 1134.5,797.9 1147.5,797.9 1160.5,797.9" fill="none" stroke="#00ffff" stroke-width="2" />
<polyline points="1160.5,797.9 1173.5,797.9" fill="none" stroke="#ffffff" stroke-width="2" />
<polyline points="1173.5,797.9 1186.5,797.9 1199.5,799" fill="none" stroke="#00ffff" stroke-width="2" />
<polyline points="1199.5,799 1212.5,799" fill="none" stroke="#ffffff" stroke-width="2" />
<polyline points="1212.5,799 1225.5,800.3 1238.5,801.8 1251.5,803.9 1264.5,805.4 1277.5,807.6 1290.5,809.9 1303.5,812.1 1316.5,812.1 1329.5,812.1" fill="none" stroke="#00ffff" stroke-width="2" />
<polyline points="1329.5,812.1 1342.5,812.5 1355.5,812.5 1368.5,810.4 1381.5,807.6 1394.5,803.9 1407.5,802.9 1420.5,802.2 1433.5,801.8" fill="none" stroke="#ffffff" stroke-width="2" />
<polyline points="1433.5,801.8 1446.5,802.4 1459.5,803.9" fill="none" stroke="#00ffff" stroke-width="2" />
<polyline points="1459.5,803.9 1472.5,802.9 1485.5,800 1498.5,795.4 1511.5,791.9 1524.5,787.7 1537.5,785 1550.5,782.1 1563.5,779.4 1576.5,777.4 1589.5,774.7 1602.5,774.7 1615.5,774.2 1628.5,772.2 1641.5,771.1 1654.5,768.6 1667.5,763.9 1680.5,758.2 1693.5,754.1" fill="none" stroke="#ffffff" stroke-width="2" />
<polyline points="1693.5,754.1 1706.5,754.9 1719.5,757.2 1732.5,761.8 1745.5,765.9 1758.5,771.1 1771.5,775.9 1784.5,776.9" fill="none" stroke="#00ffff" stroke-width="2" />
<polyline points="7,768 16.5,757.4 29.5,755.4 42.5,759.3 55.5,763.5 68.5,766.4 81.5,769.5 94.5,769.9 107.5,789.5 120.5,793 133.5,792 146.5,792.4 159.5,793.6 172.5,795.9 185.5,795.9 198.5,794.9 211.5,792.4 224.5,781.8 237.5,778.6 250.5,775.7 263.5,773.2 276.5,760.3 289.5,744.3 302.5,740 315.5,733.8 328.5,729.4 341.5,723.6 354.5,726 367.5,732.8 380.5,740.8 393.5,749.3 406.5,756.4 419.5,759.6 432.5,762.8 445.5,759.6 458.5,764.3 471.5,768 484.5,771.8 497.5,771.8 510.5,770.1 523.5,770.1 536.5,772.5 549.5,776.7 562.5,780.4 575.5,783.6 588.5,787.4 601.5,787.4 614.5,780.4 627.5,776.5 640.5,776.5 653.5,779.3 666.5,782.5 679.5,786.8 692.5,789.6 705.5,787.9 718.5,787.9 731.5,787.4 744.5,784.2 757.5,776.1 770.5,774.6 783.5,775 796.5,778.2 809.5,782.1 822.5,787.4 835.5,791.7 848.5,796.9 861.5,801.4 874.5,803.9 887.5,803.9 900.5,802.2 913.5,802.2 926.5,802.9 939.5,804.6 952.5,806.5 965.5,807.6 978.5,808.6 991.5,805 1004.5,796.4 1017.5,791.1 1030.5,787.9 1043.5,784.7 1056.5,776.5 1069.5,772.5 1082.5,775.7 1095.5,780 1108.5,783.4 1121.5,786.8 1134.5,791.7 1147.5,795.4 1160.5,797.1 1173.5,799.7 1186.5,800.7 1199.5,802.4 1212.5,803.9 1225.5,801.4 1238.5,800.7 1251.5,801.4 1264.5,802.4 1277.5,800.7 1290.5,800.3 1303.5,802.4 1316.5,799.7 1329.5,799.7 1342.5,800.7 1355.5,801.2 1368.5,802.9 1381.5,805.4 1394.5,806.1 1407.5,802.9 1420.5,800.7 1433.5,800.7 1446.5,797.1 1459.5,795.4 1472.5,776.1 1485.5,769.1 1498.5,765 1511.5,764.9 1524.5,767.6 1537.5,769.7 1550.5,772.2 1563.5,774.9 1576.5,774.2 1589.5,775.7 1602.5,778.8 1615.5,778.8 1628.5,776.3 1641.5,774.9 1654.5,767 1667.5,759.1 1680.5,757.2 1693.5,759.7 1706.5,767 1719.5,772.6 1732.5,776.3 1745.5,784 1758.5,786.3 1771.5,789.2 1784.5,780.1" fill="none" stroke="#ff0000" stroke-width="2" />
<polyline points="7,819.6 16.5,821.9 29.5,824.2 42.5,823.8 55.5,821.9 68.5,820.4 81.5,818.6 94.5,818.1 107.5,749.7 120.5,724.6 133.5,721.7 146.5,722.7 159.5,727.9 172.5,727.9 185.5,731.9 198.5,737.5 211.5,745.8 224.5,753.5 237.5,762.2 250.5,769.9 263.5,775.7 276.5,782 289.5,788.2 302.5,793.6 315.5,798.2 328.5,802.3 341.5,806 354.5,805.6 367.5,804.6 380.5,800.3 393.5,797.1 406.5,792.2 419.5,791.7 432.5,791.7 445.5,792.8 458.5,783 471.5,775.5 484.5,774 497.5,774.4 510.5,776.7 523.5,778.2 536.5,774 549.5,769.2 562.5,769.7 575.5,769.7 588.5,768 601.5,770.1 614.5,774.6 627.5,778.2 640.5,778.7 653.5,779.7 666.5,775.5 679.5,775 692.5,774 705.5,775.7 718.5,778.2 731.5,782.1 744.5,786.4 757.5,790.7 770.5,793.9 783.5,793.9 796.5,788.3 809.5,787.4 822.5,782.5 835.5,782.1 848.5,782.1 861.5,772.9 874.5,770.3 887.5,770.7 900.5,774 913.5,776.1 926.5,775.7 939.5,771.2 952.5,771.2 965.5,773.5 978.5,774.4 991.5,777.8 1004.5,782.1 1017.5,787.4 1030.5,791.1 1043.5,793.9 1056.5,799 1069.5,801.2 1082.5,797.1 1095.5,793.9 1108.5,792.8 1121.5,791.7 1134.5,782.5 1147.5,779.7 1160.5,780.4 1173.5,781.5 1186.5,784.2 1199.5,786.8 1212.5,786.8 1225.5,790 1238.5,792.8 1251.5,793.2 1264.5,794.7 1277.5,797.5 1290.5,798.6 1303.5,800.7 1316.5,802.9 1329.5,796 1342.5,791.5 1355.5,790.7 1368.5,786.8 1381.5,778.7 1394.5,778.7 1407.5,780.8 1420.5,780.8 1433.5,781.5 1446.5,784 1459.5,787.4 1472.5,795.4 1485.5,801 1498.5,803.8 1511.5,805.8 1524.5,806.4 1537.5,806.9 1550.5,808.1 1563.5,810 1576.5,810 1589.5,810 1602.5,805.8 1615.5,806 1628.5,807.5 1641.5,808.1 1654.5,810.6 1667.5,813.7 1680.5,815.8 1693.5,815.2 1706.5,800.2 1719.5,795.6 1732.5,793.6 1745.5,786.7 1758.5,787.1 1771.5,790.4 1784.5,796.1" fill="none" stroke="#00ff00" stroke-width="2" />
<rect x="15" y="763" width="3" height="9" fill="#fff"/>
<rect x="28" y="756" width="3" height="9" fill="#fff"/>
<rect x="41" y="748" width="3" height="9" fill="#fff"/>
<rect x="54" y="744" width="3" height="9" fill="#fff"/>
<rect x="67" y="740" width="3" height="9" fill="#fff"/>
<rect x="80" y="736" width="3" height="9" fill="#fff"/>
<rect x="93" y="733" width="3" height="9" fill="#fff"/>
<rect x="106" y="729" width="3" height="9" fill="#fff"/>
<rect x="119" y="725" width="3" height="9" fill="#fff"/>
<rect x="132" y="724" width="3" height="9" fill="#fff"/>
<rect x="145" y="724" width="3" height="9" fill="#fff"/>
<rect x="158" y="724" width="3" height="9" fill="#fff"/>
<rect x="171" y="723" width="3" height="9" fill="#fff"/>
<rect x="301" y="751" width="3" height="9" fill="#fff"/>
<rect x="314" y="749" width="3" height="9" fill="#fff"/>
<rect x="327" y="745" width="3" height="9" fill="#fff"/>
<rect x="340" y="741" width="3" height="9" fill="#fff"/>
<rect x="353" y="737" width="3" height="9" fill="#fff"/>
<rect x="366" y="735" width="3" height="9" fill="#fff"/>
<rect x="379" y="734" width="3" height="9" fill="#fff"/>
<rect x="756" y="805" width="3" height="9" fill="#fff"/>
<rect x="769" y="804" width="3" height="9" fill="#fff"/>
<rect x="782" y="804" width="3" height="9" fill="#fff"/>
<rect x="847" y="807" width="3" height="9" fill="#fff"/>
<rect x="860" y="805" width="3" height="9" fill="#fff"/>
<rect x="873" y="801" width="3" height="9" fill="#fff"/>
<rect x="886" y="798" width="3" height="9" fill="#fff"/>
<rect x="899" y="795" width="3" height="9" fill="#fff"/>
<rect x="912" y="793" width="3" height="9" fill="#fff"/>
<rect x="925" y="791" width="3" height="9" fill="#fff"/>
<rect x="938" y="789" width="3" height="9" fill="#fff"/>
<rect x="951" y="786" width="3" height="9" fill="#fff"/>
<rect x="964" y="783" width="3" height="9" fill="#fff"/>
<rect x="977" y="780" width="3" height="9" fill="#fff"/>
<rect x="990" y="779" width="3" height="9" fill="#fff"/>
<rect x="1055" y="787" width="3" height="9" fill="#fff"/>
<rect x="1068" y="786" width="3" height="9" fill="#fff"/>
<rect x="1081" y="786" width="3" height="9" fill="#fff"/>
<rect x="1172" y="794" width="3" height="9" fill="#fff"/>
<rect x="1211" y="795" width="3" height="9" fill="#fff"/>
<rect x="1341" y="808" width="3" height="9" fill="#fff"/>
<rect x="1354" y="808" width="3" height="9" fill="#fff"/>
<rect x="1367" y="806" width="3" height="9" fill="#fff"/>
<rect x="1380" y="804" width="3" height="9" fill="#fff"/>
<rect x="1393" y="800" width="3" height="9" fill="#fff"/>
<rect x="1406" y="799" width="3" height="9" fill="#fff"/>
<rect x="1419" y="798" width="3" height="9" fill="#fff"/>
<rect x="1432" y="798" width="3" height="9" fill="#fff"/>
<rect x="1471" y="799" width="3" height="9" fill="#fff"/>
<rect x="1484" y="796" width="3" height="9" fill="#fff"/>
<rect x="1497" y="791" width="3" height="9" fill="#fff"/>
<rect x="1510" y="788" width="3" height="9" fill="#fff"/>
<rect x="1523" y="784" width="3" height="9" fill="#fff"/>
<rect x="1536" y="781" width="3" height="9" fill="#fff"/>
<rect x="1549" y="778" width="3" height="9" fill="#fff"/>
<rect x="1562" y="775" width="3" height="9" fill="#fff"/>
<rect x="1575" y="773" width="3" height="9" fill="#fff"/>
<rect x="1588" y="771" width="3" height="9" fill="#fff"/>
<rect x="1601" y="771" width="3" height="9" fill="#fff"/>
<rect x="1614" y="770" width="3" height="9" fill="#fff"/>
<rect x="1627" y="768" width="3" height="9" fill="#fff"/>
<rect x="1640" y="767" width="3" height="9" fill="#fff"/>
<rect x="1653" y="765" width="3" height="9" fill="#fff"/>
<rect x="1666" y="760" width="3" height="9" fill="#fff"/>
<rect x="1679" y="754" width="3" height="9" fill="#fff"/>
<rect x="1692" y="750" width="3" height="9" fill="#fff"/>
</g>
<rect x="67" y="57" width="1" height="476" fill="#fff"/>
<rect x="1246" y="57" width="1" height="823" fill="#c8c8c8"/>
<rect x="7" y="533" width="1853" height="1" fill="#fff"/>
<rect x="7" y="536" width="1800" height="1" fill="#b0b0b0"/>
<rect x="7" y="720" width="1853" height="1" fill="#fff"/>
<rect x="7" y="848" width="1853" height="1" fill="#fff"/>
<rect x="1807" y="57" width="1" height="791" fill="#fff"/>
<rect x="1808" y="63" width="3" height="1" fill="#fff"/>
<rect x="1808" y="73" width="2" height="1" fill="#fff"/>
<rect x="1808" y="84" width="3" height="1" fill="#fff"/>
<rect x="1808" y="94" width="2" height="1" fill="#fff"/>
<rect x="1808" y="105" width="3" height="1" fill="#fff"/>
<rect x="1808" y="115" width="2" height="1" fill="#fff"/>
<rect x="1808" y="126" width="3" height="1" fill="#fff"/>
<rect x="1808" y="136" width="2" height="1" fill="#fff"/>
<rect x="1808" y="147" width="3" height="1" fill="#fff"/>
<rect x="1808" y="157" width="2" height="1" fill="#fff"/>
<rect x="1808" y="168" width="3" height="1" fill="#fff"/>
<rect x="1808" y="178" width="2" height="1" fill="#fff"/>
<rect x="1808" y="189" width="3" height="1" fill="#fff"/>
<rect x="1808" y="199" width="2" height="1" fill="#fff"/>
<rect x="1808" y="210" width="3" height="1" fill="#fff"/>
<rect x="1808" y="220" width="2" height="1" fill="#fff"/>
<rect x="1808" y="231" width="3" height="1" fill="#fff"/>
<rect x="1808" y="241" width="2" height="1" fill="#fff"/>
<rect x="1808" y="252" width="3" height="1" fill="#fff"/>
<rect x="1808" y="262" width="2" height="1" fill="#fff"/>
<rect x="1808" y="273" width="3" height="1" fill="#fff"/>
<rect x="1808" y="283" width="2" height="1" fill="#fff"/>
<rect x="1808" y="294" width="3" height="1" fill="#fff"/>
<rect x="1808" y="304" width="2" height="1" fill="#fff"/>
<rect x="1808" y="316" width="3" height="1" fill="#fff"/>
<rect x="1808" y="326" width="2" height="1" fill="#fff"/>
<rect x="1808" y="337" width="3" height="1" fill="#fff"/>
<rect x="1808" y="347" width="2" height="1" fill="#fff"/>
<rect x="1808" y="358" width="3" height="1" fill="#fff"/>
<rect x="1808" y="368" width="2" height="1" fill="#fff"/>
<rect x="1808" y="379" width="3" height="1" fill="#fff"/>
<rect x="1808" y="389" width="2" height="1" fill="#fff"/>
<rect x="1808" y="400" width="3" height="1" fill="#fff"/>
<rect x="1808" y="410" width="2" height="1" fill="#fff"/>
<rect x="1808" y="421" width="3" height="1" fill="#fff"/>
<rect x="1808" y="431" width="2" height="1" fill="#fff"/>
<rect x="1808" y="442" width="3" height="1" fill="#fff"/>
<rect x="1808" y="452" width="2" height="1" fill="#fff"/>
<rect x="1808" y="463" width="3" height="1" fill="#fff"/>
<rect x="1808" y="473" width="2" height="1" fill="#fff"/>
<rect x="1808" y="484" width="3" height="1" fill="#fff"/>
<rect x="1808" y="494" width="2" height="1" fill="#fff"/>
<rect x="1808" y="505" width="3" height="1" fill="#fff"/>
<rect x="1808" y="515" width="2" height="1" fill="#fff"/>
<rect x="1808" y="526" width="3" height="1" fill="#fff"/>
<rect x="159" y="849" width="1" height="3" fill="#fff"/>
<rect x="224" y="849" width="1" height="3" fill="#fff"/>
<rect x="289" y="849" width="1" height="3" fill="#fff"/>
<rect x="354" y="849" width="1" height="3" fill="#fff"/>
<rect x="419" y="849" width="1" height="3" fill="#fff"/>
<rect x="484" y="849" width="1" height="3" fill="#fff"/>
<rect x="549" y="849" width="1" height="3" fill="#fff"/>
<rect x="614" y="849" width="1" height="3" fill="#fff"/>
<rect x="679" y="849" width="1" height="3" fill="#fff"/>
<rect x="744" y="849" width="1" height="3" fill="#fff"/>
<rect x="809" y="849" width="1" height="3" fill="#fff"/>
<rect x="874" y="849" width="1" height="3" fill="#fff"/>
<rect x="939" y="849" width="1" height="3" fill="#fff"/>
<rect x="1004" y="849" width="1" height="3" fill="#fff"/>
<rect x="1069" y="849" width="1" height="3" fill="#fff"/>
<rect x="1134" y="849" width="1" height="3" fill="#fff"/>
<rect x="1199" y="849" width="1" height="3" fill="#fff"/>
<rect x="1264" y="849" width="1" height="3" fill="#fff"/>
<rect x="1329" y="849" width="1" height="3" fill="#fff"/>
<rect x="1394" y="849" width="1" height="3" fill="#fff"/>
<rect x="1459" y="849" width="1" height="3" fill="#fff"/>
<rect x="1524" y="849" width="1" height="3" fill="#fff"/>
<rect x="1589" y="849" width="1" height="3" fill="#fff"/>
<rect x="1654" y="849" width="1" height="3" fill="#fff"/>
<rect x="1719" y="849" width="1" height="3" fill="#fff"/>
<rect x="1784" y="849" width="1" height="3" fill="#fff"/>
<rect x="94" y="849" width="1" height="3" fill="#fff"/>
<rect x="107" y="849" width="1" height="3" fill="#fff"/>
<rect x="1832" y="850" width="12" height="12" fill="#fff"/>
<rect x="1833" y="851" width="10" height="10" fill="#000"/>
<rect x="1846" y="850" width="12" height="12" fill="#fff"/>
<rect x="1847" y="851" width="10" height="10" fill="#000"/>
</svg>
<div class="t" style="left:1813px;top:56.599999999999994px;color:#fff;font-size:12.5px;">7012.50</div>
<div class="t" style="left:1813px;top:77.645px;color:#fff;font-size:12.5px;">7008.75</div>
<div class="t" style="left:1813px;top:98.69px;color:#fff;font-size:12.5px;">7005.00</div>
<div class="t" style="left:1813px;top:119.735px;color:#fff;font-size:12.5px;">7001.25</div>
<div class="t" style="left:1813px;top:140.78px;color:#fff;font-size:12.5px;">6997.50</div>
<div class="t" style="left:1813px;top:161.825px;color:#fff;font-size:12.5px;">6993.75</div>
<div class="t" style="left:1813px;top:182.87px;color:#fff;font-size:12.5px;">6990.00</div>
<div class="t" style="left:1813px;top:203.915px;color:#fff;font-size:12.5px;">6986.25</div>
<div class="t" style="left:1813px;top:224.96px;color:#fff;font-size:12.5px;">6982.50</div>
<div class="t" style="left:1813px;top:246.00500000000002px;color:#fff;font-size:12.5px;">6978.75</div>
<div class="t" style="left:1813px;top:267.05px;color:#fff;font-size:12.5px;">6975.00</div>
<div class="t" style="left:1813px;top:288.095px;color:#fff;font-size:12.5px;">6971.25</div>
<div class="t" style="left:1813px;top:309.14px;color:#fff;font-size:12.5px;">6967.50</div>
<div class="t" style="left:1813px;top:330.18500000000006px;color:#fff;font-size:12.5px;">6963.75</div>
<div class="t" style="left:1813px;top:351.23px;color:#fff;font-size:12.5px;clip-path:inset(0 0 9px 0);">6960.00</div>
<div class="t" style="left:1813px;top:372.275px;color:#fff;font-size:12.5px;">6956.25</div>
<div class="t" style="left:1813px;top:393.32000000000005px;color:#fff;font-size:12.5px;">6952.50</div>
<div class="t" style="left:1813px;top:414.365px;color:#fff;font-size:12.5px;">6948.75</div>
<div class="t" style="left:1813px;top:435.4100000000001px;color:#fff;font-size:12.5px;">6945.00</div>
<div class="t" style="left:1813px;top:456.45500000000004px;color:#fff;font-size:12.5px;">6941.25</div>
<div class="t" style="left:1813px;top:477.5px;color:#fff;font-size:12.5px;">6937.50</div>
<div class="t" style="left:1813px;top:498.5450000000001px;color:#fff;font-size:12.5px;">6933.75</div>
<div class="t" style="left:1813px;top:519.59px;color:#fff;font-size:12.5px;">6930.00</div>
<div class="t" style="left:1813px;top:356.5px;color:#000;font-size:12.5px;">6959.00</div>
<div class="t" style="left:1764px;top:254.5px;color:#ffff00;font-size:12px;transform:scaleX(0.9);transform-origin:0 0;">6977</div>
<div class="t" style="left:1764px;top:406.5px;color:#ffff00;font-size:12px;transform:scaleX(0.9);transform-origin:0 0;">6950</div>
<div class="t c" style="left:129.5px;top:850.5px;width:60px;">08:45</div>
<div class="t c" style="left:194.5px;top:850.5px;width:60px;">09:00</div>
<div class="t c" style="left:259.5px;top:850.5px;width:60px;">09:15</div>
<div class="t c" style="left:324.5px;top:850.5px;width:60px;">09:30</div>
<div class="t c" style="left:389.5px;top:850.5px;width:60px;">09:45</div>
<div class="t c" style="left:454.5px;top:850.5px;width:60px;">10:00</div>
<div class="t c" style="left:519.5px;top:850.5px;width:60px;">10:15</div>
<div class="t c" style="left:584.5px;top:850.5px;width:60px;">10:30</div>
<div class="t c" style="left:649.5px;top:850.5px;width:60px;">10:45</div>
<div class="t c" style="left:714.5px;top:850.5px;width:60px;">11:00</div>
<div class="t c" style="left:779.5px;top:850.5px;width:60px;">11:15</div>
<div class="t c" style="left:844.5px;top:850.5px;width:60px;">11:30</div>
<div class="t c" style="left:909.5px;top:850.5px;width:60px;">11:45</div>
<div class="t c" style="left:974.5px;top:850.5px;width:60px;">12:00</div>
<div class="t c" style="left:1039.5px;top:850.5px;width:60px;">12:15</div>
<div class="t c" style="left:1104.5px;top:850.5px;width:60px;">12:30</div>
<div class="t c" style="left:1169.5px;top:850.5px;width:60px;">12:45</div>
<div class="t c" style="left:1234.5px;top:850.5px;width:60px;">13:00</div>
<div class="t c" style="left:1299.5px;top:850.5px;width:60px;">13:15</div>
<div class="t c" style="left:1364.5px;top:850.5px;width:60px;">13:30</div>
<div class="t c" style="left:1429.5px;top:850.5px;width:60px;">13:45</div>
<div class="t c" style="left:1494.5px;top:850.5px;width:60px;">14:00</div>
<div class="t c" style="left:1559.5px;top:850.5px;width:60px;">14:15</div>
<div class="t c" style="left:1624.5px;top:850.5px;width:60px;">14:30</div>
<div class="t c" style="left:1689.5px;top:850.5px;width:60px;">14:45</div>
<div class="t c" style="left:1754.5px;top:850.5px;width:60px;">15:00</div>
<div class="t c" style="left:64.5px;top:850.5px;width:60px;">15:15</div>
<div class="t" style="left:107px;top:863.5px;color:#fff;font-size:13px;">Feb 11 Wed</div>
<div class="t" style="left:1847px;top:866px;color:#fff;font-size:10px;">NJ</div>
<div class="t" style="left:1810.5px;top:531px;color:#b0b0b0;font-size:12px;transform:scaleX(0.9);transform-origin:0 0;">50</div>
<div class="t" style="left:1810.5px;top:566px;color:#ffff00;font-size:12px;transform:scaleX(0.9);transform-origin:0 0;">40</div>
<div class="t" style="left:1810.5px;top:603px;color:#ff8000;font-size:12px;transform:scaleX(0.9);transform-origin:0 0;">30</div>
<div class="t" style="left:1810.5px;top:639px;color:#0000ff;font-size:12px;transform:scaleX(0.9);transform-origin:0 0;">20</div>
<div style="position:absolute;left:1808px;top:534px;width:52px;height:314px;overflow:hidden">
<div class="t" style="left:1.5px;top:85.5px;font-size:13.5px;transform:scaleX(0.9);transform-origin:0 0;word-spacing:1px;">ADX&nbsp;&nbsp;8,3</div>
<div class="t" style="left:1.5px;top:243px;font-size:13.5px;transform:scaleX(0.9);transform-origin:0 0;word-spacing:1px;">ADX&nbsp;&nbsp;13,3</div>
</div>
<div style="position:absolute;left:1808px;top:721px;width:52px;height:20px;overflow:hidden"><div class="t" style="left:2.5px;top:-5.5px;color:#ffff00;font-size:12px;transform:scaleX(0.9);transform-origin:0 0;">40</div></div>
<div class="t" style="left:1810.5px;top:746px;color:#ff8000;font-size:12px;transform:scaleX(0.9);transform-origin:0 0;">30</div>
<div style="position:absolute;left:7px;top:57px;width:60px;height:200px;overflow:hidden"><div class="t" style="left:2px;top:1px;color:#fff;font-size:12.6px;word-spacing:0.6px">ADX&nbsp;&nbsp;8,3</div><div class="t" style="left:7px;top:17px;color:#0000ff;font-size:12.6px;word-spacing:0.6px">19.71</div><div class="t" style="left:7px;top:33px;color:#00ff00;font-size:12.6px;word-spacing:0.6px">16.00</div><div class="t" style="left:7px;top:49px;color:#ff0000;font-size:12.6px;word-spacing:0.6px">13.38</div><div class="t" style="left:2px;top:67px;color:#fff;font-size:12.6px;word-spacing:0.6px">ADX&nbsp;&nbsp;13,3</div><div class="t" style="left:7px;top:83px;color:#0000ff;font-size:12.6px;word-spacing:0.6px">14.18</div><div class="t" style="left:7px;top:99px;color:#00ff00;font-size:12.6px;word-spacing:0.6px">17.31</div><div class="t" style="left:7px;top:115px;color:#ff0000;font-size:12.6px;word-spacing:0.6px">14.61</div><div class="t" style="left:2px;top:133px;color:#fff;font-size:12.6px;word-spacing:0.6px">AVE&nbsp;&nbsp;8,10</div><div class="t" style="left:2px;top:149px;color:#00ffff;font-size:12.6px;word-spacing:0.6px">6965.7690</div></div>
<div class="t c" style="left:541.5px;top:382px;width:40px;font-size:12px">+8</div>
<div class="t c" style="left:906.5px;top:316px;width:40px;font-size:12px">+3</div>
<div class="t c" style="left:1452.5px;top:231px;width:40px;font-size:12px">+1</div>
<div class="t" style="left:1259px;top:152px;color:#c0c0c0;font-family:'Liberation Mono',monospace;font-size:10px;">6996.82</div>
<div style="position:absolute;left:1808px;top:151px;width:52px;height:1px;background:#c0c0c0"></div>
<div style="position:absolute;left:812px;top:196px;width:76px;height:26px;background:#fff"></div>
<div class="t" style="left:814.5px;top:195px;color:#0000ff;font-weight:bold;font-size:12.6px;">260211&nbsp;&nbsp;+12</div>
</div>
</body></html>
